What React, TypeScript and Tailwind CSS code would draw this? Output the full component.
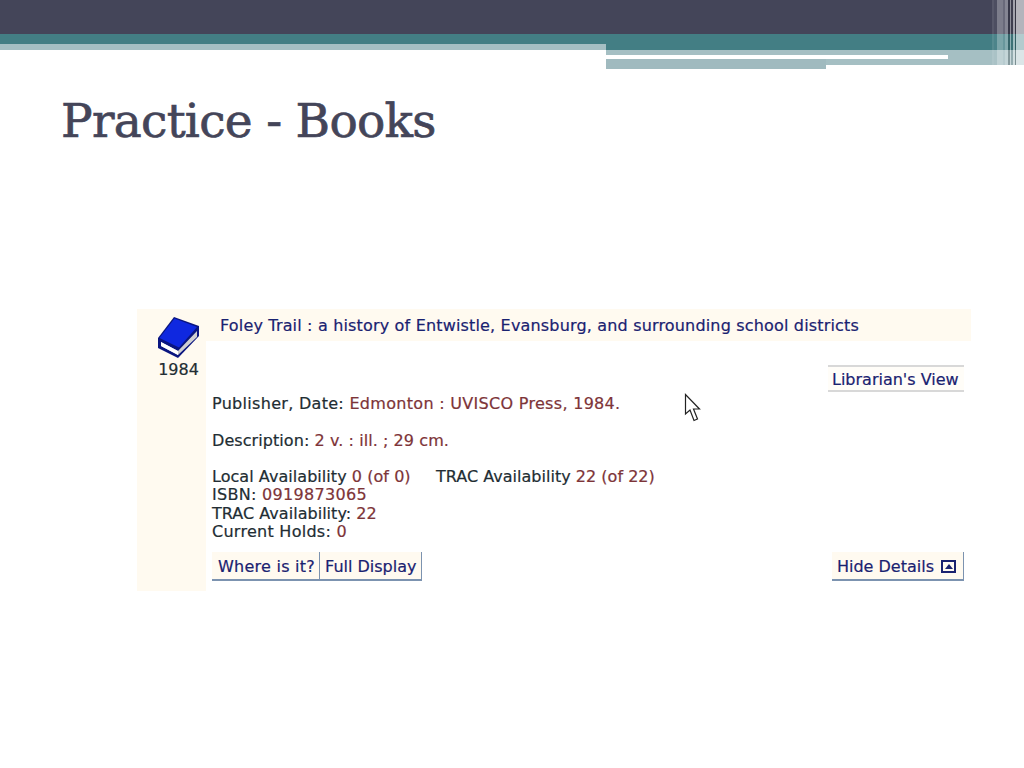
const SANS = "font-['DejaVu_Sans',Verdana,sans-serif]";

const Stripes = () => (
  <div className="absolute top-0 right-0 flex h-[65px] w-[32px]">
    <div className="w-[2px] bg-white/10" />
    <div className="w-[3px] bg-white/5" />
    <div className="w-[6px] bg-white/30" />
    <div className="w-[2px] bg-white/20" />
    <div className="w-[3px] bg-white/35" />
    <div className="w-[2px] bg-black/20" />
    <div className="w-[1px] bg-white/40" />
    <div className="w-[2px] bg-black/10" />
    <div className="w-[2px] bg-white/50" />
    <div className="w-[1px] bg-black/25" />
    <div className="flex-1 bg-white/60" />
  </div>
);

const Header = () => (
  <div className="relative h-[69px]">
    <div className="h-[34px] bg-[#444559]" />
    <div className="flex">
      <div className="w-[606px]">
        <div className="h-[10px] bg-[#437e84]" />
        <div className="h-[6px] bg-[#a5bfc3]" />
      </div>
      <div className="flex-1">
        <div className="h-[16px] bg-[#437e84]" />
        <div className="h-[5px] bg-[#a5bfc3]" />
        <div className="flex h-[4px] bg-[#a5bfc3]">
          <div className="w-[342px] bg-white" />
        </div>
        <div className="flex">
          <div className="h-[10px] w-[220px] bg-[#a0babf]" />
          <div className="h-[6px] flex-1 bg-[#a5bfc3]" />
        </div>
      </div>
    </div>
    <Stripes />
  </div>
);

const BookIcon = () => (
  <svg width="43" height="43" viewBox="0 0 43 43">
    <path d="M1 22 L17 1 L42 10 L42 20 L21 42 L1 32 Z" fill="#0a1580" />
    <path d="M4 26 L21 35 L40 15 L40 21 L21 39 L4 30 Z" fill="#cfcfd2" />
    <path d="M4 26 L21 35 L21 39 L4 30 Z" fill="#ffffff" />
    <path d="M2.5 22 L17.5 2.5 L40 11 L22 31.5 Z" fill="#0f28e0" />
  </svg>
);

const Cursor = () => (
  <svg className="absolute left-[684px] top-[393px]" width="18" height="30" viewBox="0 0 18 30">
    <path d="M1.5 1.5 L1.5 21 L6 17 L10 27.5 L13.5 26 L9.5 16 L15.5 16 Z" fill="#fff" stroke="#222" strokeWidth="1.2" />
  </svg>
);

const Val = ({ children }: { children: React.ReactNode }) => (
  <span className="text-[#7d3438] [-webkit-text-stroke:0.2px_#7d3438]">{children}</span>
);

const App = () => {
  return (
    <div className={`relative h-[768px] w-[1024px] overflow-hidden bg-white ${SANS}`}>
      <Header />
      <h1 className="ml-[61px] mt-[22px] h-[60px] font-['DejaVu_Serif',serif] text-[47px] leading-[60px] tracking-[-0.7px] text-[#444559] [-webkit-text-stroke:0.7px_#444559]">
        Practice - Books
      </h1>
      <div className="ml-[137px] mt-[158px] flex h-[282px] w-[834px] text-[16px] text-[#222d33] [-webkit-text-stroke:0.2px]">
        <div className="flex w-[69px] flex-col items-center bg-[#fffaf0] pl-[14px] pt-[7px]">
          <BookIcon />
          <div className="mt-[2px] leading-[18px]">1984</div>
        </div>
        <div className="flex flex-1 flex-col">
          <div className="flex h-[32px] items-center bg-[#fffaf0] pl-[14px] pt-[2px] tracking-[0.17px] text-[#1a2270]">
            Foley Trail : a history of Entwistle, Evansburg, and surrounding school districts
          </div>
          <div className="mt-[24px] flex justify-end pr-[7px]">
            <div className="flex h-[27px] w-[136px] items-center border-y-2 border-[#d8d8d8] bg-[#fffdf8] pl-[4px] pt-[2px] text-[#1a2270]">
              Librarian's View
            </div>
          </div>
          <div className="mt-[3px] pl-[6px] leading-[18.3px]">
            <div className="tracking-[0.3px]">Publisher, Date: <Val>Edmonton : UVISCO Press, 1984.</Val></div>
            <div className="mt-[18.3px] tracking-[0.07px]">Description: <Val>2 v. : ill. ; 29 cm.</Val></div>
            <div className="mt-[18.3px] flex">
              <div className="w-[224px] tracking-[0.05px]">Local Availability <Val>0 (of 0)</Val></div>
              <div className="tracking-[0.02px]">TRAC Availability <Val>22 (of 22)</Val></div>
            </div>
            <div className="tracking-[0.3px]">ISBN: <Val>0919873065</Val></div>
            <div className="tracking-[0.03px]">TRAC Availability: <Val>22</Val></div>
            <div className="tracking-[0.27px]">Current Holds: <Val>0</Val></div>
          </div>
          <div className="mt-[11px] flex justify-between pl-[6px] pr-[7px] text-[#1a2270]">
            <div className="flex h-[29px] border-b-2 border-[#7c93b0] bg-[#fffaf0]">
              <div className="flex items-center border-r border-[#7c93b0] pl-[6px] pr-[4px] pt-[2px] tracking-[0.25px]">Where is it?</div>
              <div className="flex items-center border-r border-[#7c93b0] px-[5px] pt-[2px]">Full Display</div>
            </div>
            <div className="flex h-[29px] items-center gap-[7px] border-b-2 border-r border-[#7c93b0] bg-[#fffaf0] pl-[5px] pr-[7px] pt-[2px]">
              Hide Details
              <span className="flex h-[13px] w-[15px] items-center justify-center border-2 border-[#1a2270]">
                <span className="h-0 w-0 border-x-[4px] border-b-[5px] border-x-transparent border-b-[#1a2270]" />
              </span>
            </div>
          </div>
        </div>
      </div>
      <Cursor />
    </div>
  );
};

export default App;
